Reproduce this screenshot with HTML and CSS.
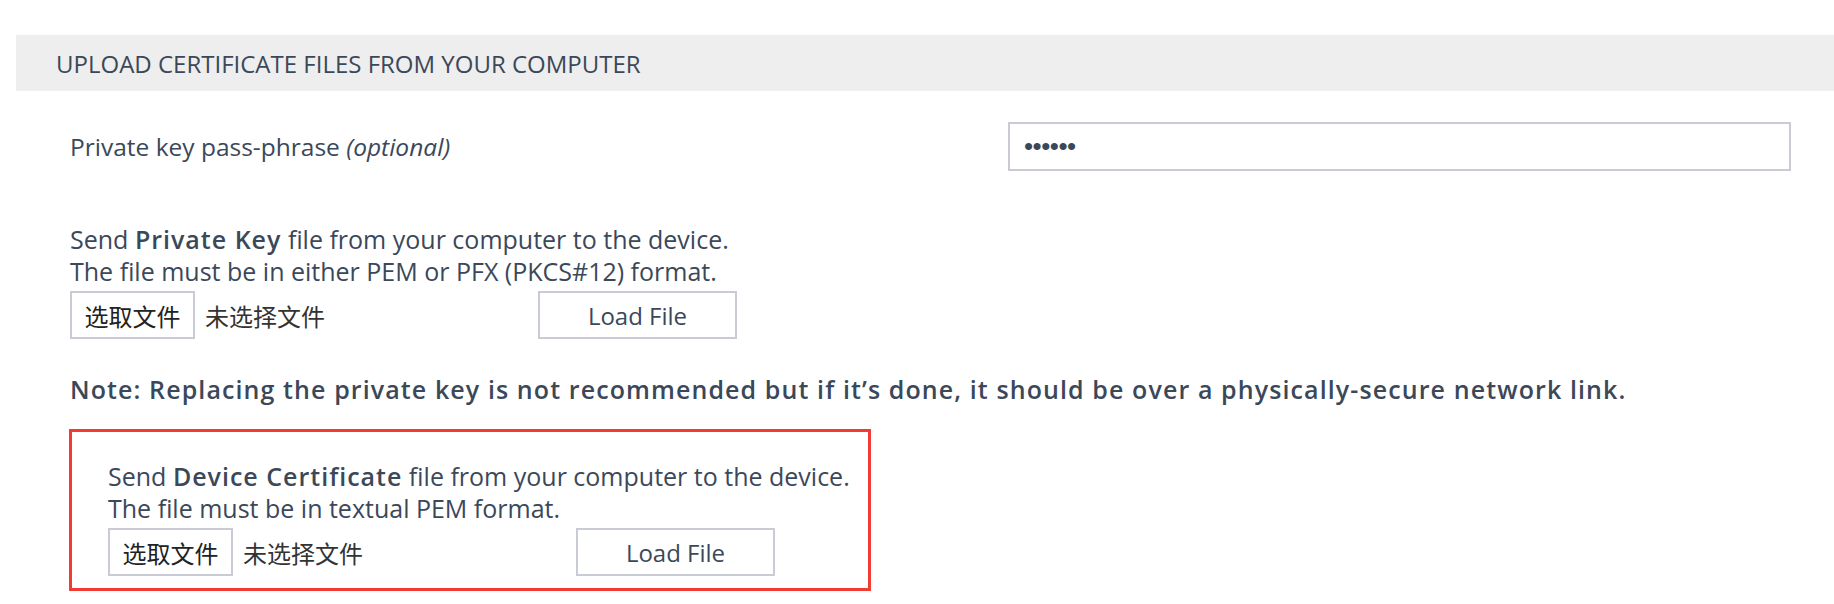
FILE: index.html
```html
<!DOCTYPE html>
<html lang="en">
<head>
  <meta charset="UTF-8" />
  <title>Certificates</title>
  <link rel="stylesheet" href="styles.css">
</head>
<body>

  <div class="section-head">Upload certificate files from your computer</div>

  <div class="pass-row">
    <label for="passphrase">Private key pass-phrase <em>(optional)</em></label>
    <input type="password" id="passphrase" value="secret">
  </div>

  <div class="upload">
    <p>Send <b>Private Key</b> file from your computer to the device.<br>
    The file must be in either PEM or PFX (PKCS#12) format.</p>
    <div class="file-row">
      <div class="file-pick">
        <span class="pick-btn">选取文件</span>
        <span class="pick-none">未选择文件</span>
      </div>
      <button>Load File</button>
    </div>
  </div>

  <p class="note">Note: Replacing the private key is not recommended but if it’s done, it should be over a physically-secure network link.</p>

  <div class="upload highlight">
    <p>Send <b>Device Certificate</b> file from your computer to the device.<br>
    The file must be in textual PEM format.</p>
    <div class="file-row">
      <div class="file-pick">
        <span class="pick-btn">选取文件</span>
        <span class="pick-none">未选择文件</span>
      </div>
      <button>Load File</button>
    </div>
  </div>

</body>
</html>
```

FILE: styles.css
```css
body {
  margin: 0;
  font-family: "Open Sans", "Noto Sans CJK SC", sans-serif;
  color: #3b4859;
  background: #fff;
}

.section-head {
  margin: 35px 0 0 16px;
  height: 56px;
  padding-left: 40px;
  display: flex;
  align-items: center;
  background: #eeeeee;
  font-size: 24px;
  text-transform: uppercase;
}

.pass-row {
  display: flex;
  justify-content: space-between;
  align-items: center;
  margin-top: 31px;
  padding: 0 43px 0 70px;
  font-size: 24.5px;
}

.pass-row input {
  width: 783px;
  height: 49px;
  box-sizing: border-box;
  border: 2px solid #c9ccd5;
  padding: 0 14px;
  font-size: 26px;
  letter-spacing: -0.5px;
  color: #3b4859;
  outline: none;
}

.upload {
  margin: 52px 0 0 70px;
  font-size: 25px;
}

.upload p {
  margin: 0;
  line-height: 32px;
}

.upload b {
  font-weight: 600;
  letter-spacing: 1px;
}

.file-row {
  display: flex;
  align-items: center;
  margin-top: 4px;
}

.file-pick {
  width: 468px;
  display: flex;
  align-items: center;
}

.pick-btn {
  display: flex;
  align-items: center;
  justify-content: center;
  width: 125px;
  height: 48px;
  box-sizing: border-box;
  border: 2px solid #c9ccd5;
  font-size: 24px;
  color: #222;
}

.pick-none {
  margin-left: 10px;
  font-size: 24px;
  color: #333;
}

button {
  width: 199px;
  height: 48px;
  background: #fff;
  border: 2px solid #c9ccd5;
  font-family: inherit;
  font-size: 24px;
  color: #3b4859;
}

.note {
  margin: 34px 0 0 70px;
  font-size: 25px;
  font-weight: 600;
  letter-spacing: 1.1px;
  line-height: 32px;
}

.highlight {
  margin: 24px 0 0 69px;
  width: 802px;
  box-sizing: border-box;
  border: 3px solid #f23b33;
  padding: 28px 0 12px 36px;
}
```
